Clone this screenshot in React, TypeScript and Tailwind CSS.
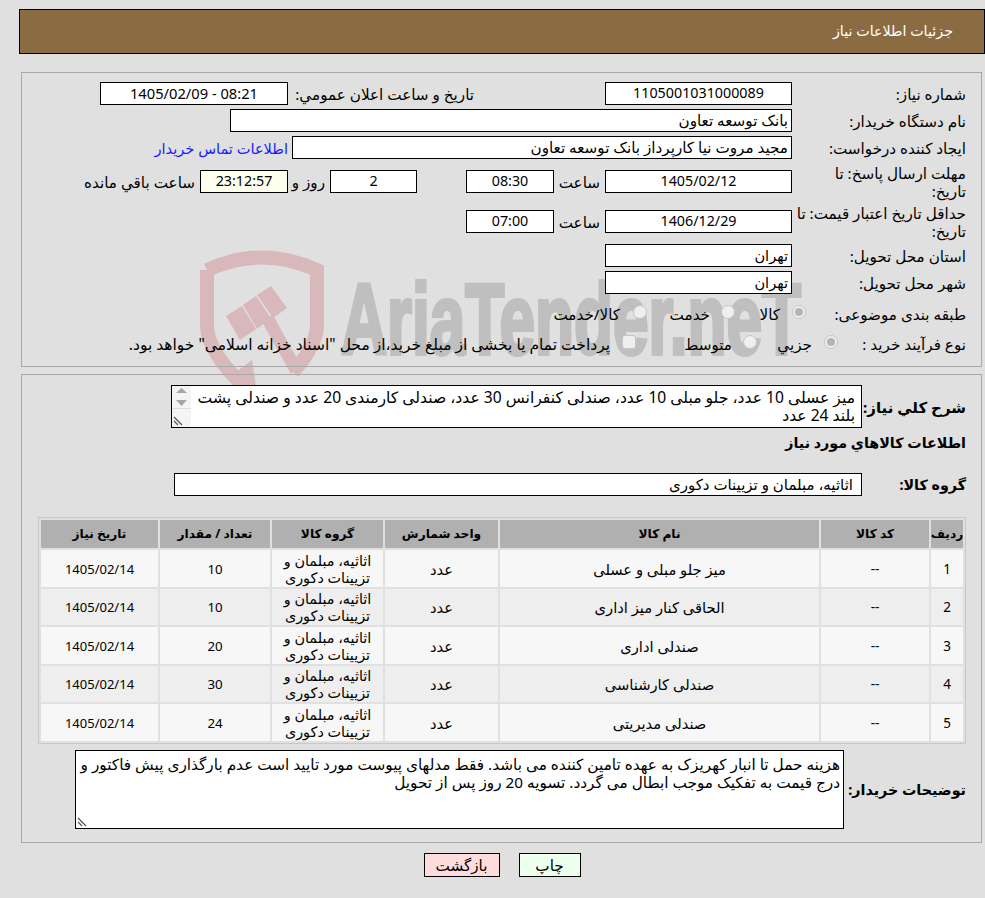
import React from "react";

const F = "[font-family:'Noto_Sans','DejaVu_Sans',sans-serif]";

function Box({ className = "", children }: { className?: string; children?: React.ReactNode }) {
  return <div className={"shrink-0 border border-black bg-white h-[23px] leading-[20px] text-center whitespace-nowrap " + className}>{children}</div>;
}
function Label({ w, children, bold }: { w: string; children: React.ReactNode; bold?: boolean }) {
  return <div className={"shrink-0 pr-[15px] " + w + (bold ? " font-bold" : "")}>{children}</div>;
}
function Radio({ on, square }: { on?: boolean; square?: boolean }) {
  return (
    <span className={"shrink-0 flex items-center justify-center w-[14px] h-[14px] border border-[#c4c4c4] bg-[#efefef] mb-[4px] " + (square ? "rounded-[3px]" : "rounded-full")}>
      {on ? <span className="w-[8px] h-[8px] rounded-full bg-[#b4b4b4]" /> : null}
    </span>
  );
}
function Opt({ w, gap, on, square, children }: { w: string; gap: string; on?: boolean; square?: boolean; children: React.ReactNode }) {
  return (
    <div className={"shrink-0 flex items-center whitespace-nowrap " + w + " " + gap}>
      <Radio on={on} square={square} />
      <span>{children}</span>
    </div>
  );
}
function Grip() {
  return (
    <svg width="12" height="12" viewBox="0 0 12 12" className="absolute left-[1px] bottom-[1px]">
      <path d="M1 3l8 8M1 7l4 4" stroke="#555" strokeWidth="1.2" fill="none" />
    </svg>
  );
}
function Watermark() {
  return (
    <svg width="985" height="898" viewBox="0 0 985 898" className="absolute left-0 top-0">
      <path d="M207 270Q262 245 317 270V325Q317 345 293 372M207 270V325Q207 352 246 388" fill="none" stroke="#d8b8ba" strokeWidth="14" />
      <g fill="#d8b8ba">
        <path d="M226 316L242 306L256 329L240 340Z" />
        <path d="M243 305L256 296L271 318L257 329Z" />
        <path d="M257 295L271 286L287 308L273 318Z" />
        <path d="M262 322L273 315L301 366L291 374Z" />
        <path d="M228 378L252 360L256 386L236 386Z" />
      </g>
      <text x="341" y="354" fontFamily="'Liberation Sans'" fontWeight="700" fontSize="100" fill="#bfbfbf" stroke="#bfbfbf" strokeWidth="4" textLength="460" lengthAdjust="spacingAndGlyphs" direction="ltr">AriaTender.neT</text>
    </svg>
  );
}
const rows = [
  ["1", "--", "میز جلو مبلی و عسلی", "عدد", "10", "h-[37px]"],
  ["2", "--", "الحاقی کنار میز اداری", "عدد", "10", "h-[36px]"],
  ["3", "--", "صندلی اداری", "عدد", "20", "h-[37px]"],
  ["4", "--", "صندلی کارشناسی", "عدد", "30", "h-[36px]"],
  ["5", "--", "صندلی مدیریتی", "عدد", "24", "h-[37px]"],
];
const heads = ["ردیف", "کد کالا", "نام کالا", "واحد شمارش", "گروه کالا", "تعداد / مقدار", "تاریخ نیاز"];
const NUM = "text-[14.3px]";

export default function App() {
  return (
    <div dir="rtl" className={"relative w-[985px] h-[898px] overflow-hidden bg-[#e0e0e0] text-[15.2px] leading-[18px] text-black " + F}>
      <Watermark />
      <div className="relative">
        <div className="pt-[9px] pl-[19px]">
          <div className="h-[45px] border border-black bg-[#8b6b41] text-white text-[14.3px] pr-[31px] leading-[42px]">جزئیات اطلاعات نیاز</div>
        </div>

        <div className="mt-[18px] ml-[21px] mr-[3px] h-[295px] border border-[#a8a8a8] pt-[9px]">
          <div className="flex items-center h-[23px]">
            <Label w="w-[189px]">شماره نیاز:</Label>
            <Box className={"w-[187px] " + NUM}>1105001031000089</Box>
            <div className="w-[181px] mr-[131px] whitespace-nowrap shrink-0">تاریخ و ساعت اعلان عمومي:</div>
            <Box className="w-[188px] mr-[5px] text-[14.7px]"><span dir="ltr">1405/02/09 - 08:21</span></Box>
          </div>
          <div className="flex items-center h-[23px] mt-[4px]">
            <Label w="w-[189px]">نام دستگاه خریدار:</Label>
            <Box className="w-[562px] text-right pr-[3px]">بانک توسعه تعاون</Box>
          </div>
          <div className="flex items-center h-[23px] mt-[4px]">
            <Label w="w-[189px]">ایجاد کننده درخواست:</Label>
            <Box className="w-[500px] text-right pr-[3px]">مجید مروت نیا کارپرداز بانک توسعه تعاون</Box>
            <a className="mr-[4px] whitespace-nowrap text-[#1a1aff] text-[14.6px]">اطلاعات تماس خریدار</a>
          </div>
          <div className="flex items-center h-[23px] mt-[11px]">
            <Label w="w-[189px]"><span className="block pl-[18px]">مهلت ارسال پاسخ: تا تاریخ:</span></Label>
            <Box className={"w-[187px] " + NUM}>1405/02/12</Box>
            <div className="w-[51px] shrink-0 pr-[5px]">ساعت</div>
            <Box className={"w-[88px] " + NUM}>08:30</Box>
            <Box className={"w-[87px] mr-[49px] " + NUM}>2</Box>
            <div className="w-[42px] shrink-0 pr-[5px] whitespace-nowrap">روز و</div>
            <Box className={"w-[88px] !bg-[#ffffee] " + NUM}>23:12:57</Box>
            <div className="pr-[5px] whitespace-nowrap">ساعت باقي مانده</div>
          </div>
          <div className="flex items-center h-[23px] mt-[17px]">
            <Label w="w-[189px]">حداقل تاریخ اعتبار قیمت: تا تاریخ:</Label>
            <Box className={"w-[187px] " + NUM}>1406/12/29</Box>
            <div className="w-[51px] shrink-0 pr-[5px]">ساعت</div>
            <Box className={"w-[88px] " + NUM}>07:00</Box>
          </div>
          <div className="flex items-center h-[23px] mt-[11px]">
            <Label w="w-[189px]">استان محل تحویل:</Label>
            <Box className="w-[187px] text-right pr-[3px] text-[14.6px]">تهران</Box>
          </div>
          <div className="flex items-center h-[23px] mt-[4px]">
            <Label w="w-[189px]">شهر محل تحویل:</Label>
            <Box className="w-[187px] text-right pr-[3px] text-[14.6px]">تهران</Box>
          </div>
          <div className="flex items-center h-[24px] mt-[8px]">
            <Label w="w-[175px]">طبقه بندی موضوعی:</Label>
            <Opt w="w-[71px]" gap="gap-[12px]" on>کالا</Opt>
            <Opt w="w-[88px]" gap="gap-[11px]">خدمت</Opt>
            <Opt w="w-[100px]" gap="gap-[13px]">کالا/خدمت</Opt>
          </div>
          <div className="flex items-center h-[24px] mt-[6px]">
            <Label w="w-[143px]">نوع فرآیند خرید :</Label>
            <Opt w="w-[81px]" gap="gap-[12px]" on>جزيي</Opt>
            <Opt w="w-[121px]" gap="gap-[11px]">متوسط</Opt>
            <Opt w="w-[520px]" gap="gap-[12px]" square><span className="text-[15.5px]">پرداخت تمام یا بخشی از مبلغ خرید،از محل "اسناد خزانه اسلامی" خواهد بود.</span></Opt>
          </div>
        </div>

        <div className="mt-[7px] ml-[21px] mr-[3px] h-[469px] border border-[#a8a8a8] pt-[10px]">
          <div className="flex items-center">
            <Label w="w-[119px]" bold><span className="text-[15px] whitespace-nowrap">شرح کلي نیاز:</span></Label>
            <div className="relative shrink-0 w-[691px] h-[43px] border border-black bg-white pr-[6px] pl-[20px] pt-[2px] overflow-hidden text-[15.6px]">
              میز عسلی 10 عدد، جلو مبلی 10 عدد، صندلی کنفرانس 30 عدد، صندلی کارمندی 20 عدد و صندلی پشت بلند 24 عدد
              <div className="absolute left-0 top-0 bottom-0 w-[19px] bg-[#f4f4f4]">
                <svg width="19" height="41" viewBox="0 0 19 41" className="block">
                  <path d="M4 7L9.5 2L15 7Z" fill="#a6a6a6" />
                  <path d="M4 14L9.5 20L15 14Z" fill="#a6a6a6" />
                  <path d="M0 22.5H19" stroke="#dcdcdc" />
                </svg>
                <Grip />
              </div>
            </div>
          </div>
          <div className="mt-[3px] h-[24px] leading-[24px] pr-[15px] font-bold text-[14.3px]">اطلاعات کالاهاي مورد نیاز</div>
          <div className="flex items-center mt-[18px]">
            <Label w="w-[119px]" bold><span className="text-[14.3px]">گروه کالا:</span></Label>
            <Box className="w-[688px] text-right pr-[8px] text-[15px]">اثاثیه، مبلمان و تزیینات دکوری</Box>
          </div>
          <div className="mt-[21px] ml-[16px] mr-[15px] border border-[#c8c8c8] p-[2px]">
            <div className="grid grid-cols-[32px_108px_319px_113px_111px_110px_117px] gap-[2px]">
              {heads.map((h) => (
                <div key={h} className="h-[28px] flex items-center justify-center bg-[#b0b0b0] font-bold text-[12.2px] whitespace-nowrap">{h}</div>
              ))}
              {rows.map((r, i) => {
                const bg = i % 2 === 0 ? "bg-[#f7f7f7]" : "bg-[#eeeeee]";
                const cell = "flex items-center justify-center text-center " + bg + " " + r[5];
                return (
                  <React.Fragment key={r[0]}>
                    <div className={cell + " text-[13.5px]"}>{r[0]}</div>
                    <div className={cell + " text-[13.5px]"}>{r[1]}</div>
                    <div className={cell + " text-[14.7px]"}>{r[2]}</div>
                    <div className={cell + " text-[14.7px]"}>{r[3]}</div>
                    <div className={cell + " text-[14.4px] leading-[17px]"}>اثاثیه، مبلمان و تزیینات دکوری</div>
                    <div className={cell + " text-[13.3px]"}>{r[4]}</div>
                    <div className={cell + " text-[13px]"}>1405/02/14</div>
                  </React.Fragment>
                );
              })}
            </div>
          </div>
          <div className="flex items-center mt-[6px]">
            <Label w="w-[137px]" bold><span className="text-[14.3px] whitespace-nowrap">توضیحات خریدار:</span></Label>
            <div className="relative shrink-0 w-[769px] h-[79px] border border-black bg-white pr-[3px] pl-[3px] pt-[4px] text-[15.3px]">
              هزینه حمل تا انبار کهریزک به عهده تامین کننده می باشد. فقط مدلهای پیوست مورد تایید است عدم بارگذاری پیش فاکتور و درج قیمت به تفکیک موجب ابطال می گردد. تسویه 20 روز پس از تحویل
              <Grip />
            </div>
          </div>
        </div>

        <div className="mt-[10px] flex justify-center gap-[19px] pl-[19px]">
          <button className="w-[62px] h-[24px] border border-black bg-[#edffed] leading-[20px]">چاپ</button>
          <button className="w-[76px] h-[24px] border border-black bg-[#ffdcdc] leading-[20px]">بازگشت</button>
        </div>
      </div>
    </div>
  );
}
